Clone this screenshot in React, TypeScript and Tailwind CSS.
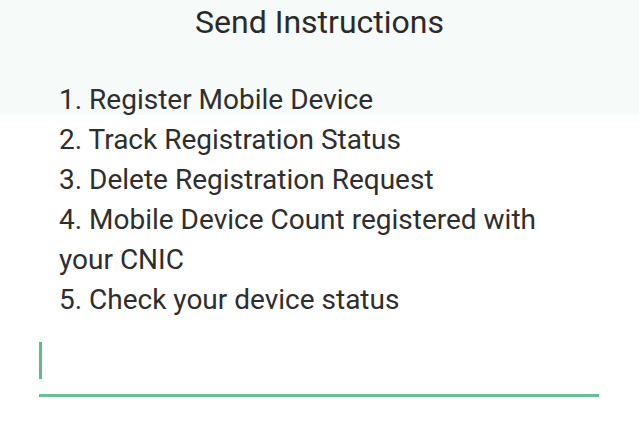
export default function App() {
  const items = [
    "1. Register Mobile Device",
    "2. Track Registration Status",
    "3. Delete Registration Request",
    "4. Mobile Device Count registered with your CNIC",
    "5. Check your device status",
  ];
  return (
    <div className="w-[639px] h-[426px] overflow-hidden bg-white text-[#2b2b2b]" style={{ fontFamily: "Roboto, 'Noto Sans', sans-serif" }}>
      <div className="bg-[#f6faf8] h-[115px] pt-[2px]">
        <div className="text-center text-[32px] leading-[40px] text-[#2a2a2a]">Send Instructions</div>
      </div>
      <div className="-mt-[35px] pl-[59px] w-[580px] text-[28px] leading-[40px] text-[#2e2e2e]">
        {items.map((t) => (
          <div key={t}>{t}</div>
        ))}
      </div>
      <div className="mt-[21px] mx-[39px] w-[560px]">
        <div className="h-[38px] flex items-center">
          <div className="w-[3px] h-[37px] bg-[#5cbd8c]" />
        </div>
        <div className="mt-[15px] h-[3px] bg-[#6cbf94]" />
      </div>
    </div>
  );
}
